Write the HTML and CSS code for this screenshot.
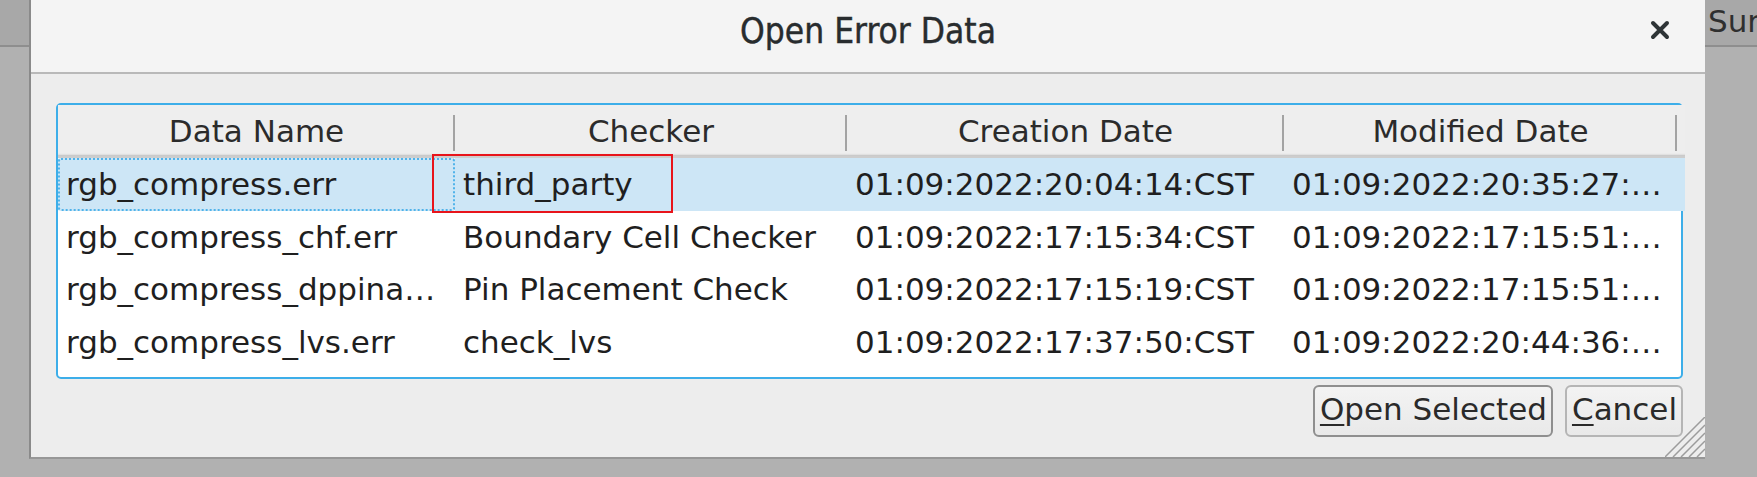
FILE: index.html
```html
<!DOCTYPE html>
<html>
<head>
<meta charset="utf-8">
<link rel="stylesheet" href="styles.css">
</head>
<body>
<div class="screen">
  <div class="side side-left"><div class="side-head"></div></div>
  <div class="dialog">
    <div class="titlebar">
      <div class="title">Open Error Data</div>
      <div class="close">
        <svg width="20" height="20" viewBox="0 0 20 20"><path d="M3 3 L17 17 M17 3 L3 17" stroke="#2e3436" stroke-width="4" stroke-linecap="round"/></svg>
      </div>
    </div>
    <div class="body">
      <div class="frame">
        <div class="grid">
          <div class="hcell">Data Name</div>
          <div class="hcell">Checker</div>
          <div class="hcell">Creation Date</div>
          <div class="hcell">Modified Date</div>
          <div class="hcell hfill"></div>

          <div class="cell sel focus">rgb_compress.err</div>
          <div class="cell sel">third_party</div>
          <div class="cell sel">01:09:2022:20:04:14:CST</div>
          <div class="cell sel">01:09:2022:20:35:27:…</div>
          <div class="cell sel"></div>

          <div class="cell">rgb_compress_chf.err</div>
          <div class="cell">Boundary Cell Checker</div>
          <div class="cell">01:09:2022:17:15:34:CST</div>
          <div class="cell">01:09:2022:17:15:51:…</div>
          <div class="cell"></div>

          <div class="cell">rgb_compress_dppina…</div>
          <div class="cell">Pin Placement Check</div>
          <div class="cell">01:09:2022:17:15:19:CST</div>
          <div class="cell">01:09:2022:17:15:51:…</div>
          <div class="cell"></div>

          <div class="cell">rgb_compress_lvs.err</div>
          <div class="cell">check_lvs</div>
          <div class="cell">01:09:2022:17:37:50:CST</div>
          <div class="cell">01:09:2022:20:44:36:…</div>
          <div class="cell"></div>
        </div>
        <div class="redbox"></div>
      </div>
      <div class="buttons">
        <button class="btn btn-default"><span class="mn">O</span>pen Selected</button>
        <button class="btn"><span class="mn">C</span>ancel</button>
      </div>
      <svg class="grip" width="40" height="40" viewBox="0 0 40 40">
        <path d="M32 40 L40 32 M24 40 L40 24 M16 40 L40 16 M8 40 L40 8 M0 40 L40 0" stroke="#9c9c9c" stroke-width="1.5"/>
      </svg>
    </div>
  </div>
  <div class="side side-right"><div class="side-head"><span class="sur">Sur</span></div></div>
</div>
</body>
</html>
```

FILE: styles.css
```css
html, body {
  margin: 0;
  padding: 0;
}
body {
  width: 1757px;
  height: 477px;
  overflow: hidden;
  background: #b1b1b1;
  font-family: "DejaVu Sans", "Liberation Sans", sans-serif;
  color: #232323;
}
.screen {
  display: flex;
  align-items: flex-start;
  height: 477px;
}
.side {
  height: 477px;
  background: #b1b1b1;
  flex: none;
}
.side-left { width: 29px; }
.side-right { width: 52px; }
.side-head {
  height: 45px;
  background: #a8a8a8;
  border-bottom: 2px solid #8e8e8e;
  overflow: hidden;
}
.sur {
  display: block;
  font-size: 31px;
  line-height: 42px;
  padding-left: 3px;
  color: #2f2f2f;
  white-space: nowrap;
}
.dialog {
  width: 1674px;
  height: 457px;
  flex: none;
  border-left: 2px solid #8a8a8a;
  border-bottom: 2px solid #979797;
  background: #ededed;
  display: flex;
  flex-direction: column;
}
.titlebar {
  height: 72px;
  background: #f4f4f4;
  border-bottom: 2px solid #b9b9b9;
  position: relative;
  display: flex;
  align-items: center;
  justify-content: center;
  flex: none;
}
.title {
  font-size: 35px;
  font-stretch: condensed;
  color: #282c2e;
  margin-top: -11px;
  -webkit-text-stroke: 0.4px #282c2e;
}
.close {
  position: absolute;
  left: 1619px;
  top: 20px;
  width: 20px;
  height: 20px;
}
.close svg { display: block; }
.body {
  flex: 1;
  position: relative;
  padding: 29px 22px 0 25px;
}
.frame {
  position: relative;
  height: 272px;
  border: 2px solid #3daee9;
  border-radius: 5px;
  background: #ffffff;
}
.grid {
  display: grid;
  grid-template-columns: 397px 392px 437px 393px 1fr;
  grid-template-rows: 53px repeat(4, 52.5px);
  font-size: 31px;
}
.hcell {
  background: #eeeeee;
  border-bottom: 2px solid #cdcdcd;
  box-shadow: inset 0 -3px 2px -2px #bdbdbd;
  text-align: center;
  line-height: 52px;
  position: relative;
  color: #2b2b2b;
  white-space: nowrap;
}
.hcell:not(.hfill)::after {
  content: "";
  position: absolute;
  right: 0;
  top: 10px;
  height: 36px;
  width: 2px;
  background: #a3a3a3;
}
.cell {
  line-height: 52px;
  padding-left: 8px;
  white-space: nowrap;
  overflow: hidden;
  color: #1f1f1f;
}
.sel {
  background: #cde6f6;
}
.focus {
  outline: 2px dotted #4fb3ea;
  outline-offset: -2px;
  border-radius: 3px;
}
.redbox {
  position: absolute;
  left: 374px;
  top: 49px;
  width: 237px;
  height: 55px;
  border: 2px solid #e8141b;
}
.buttons {
  display: flex;
  justify-content: flex-end;
  gap: 12px;
  margin-top: 6px;
}
.btn {
  height: 52px;
  font-family: "DejaVu Sans", "Liberation Sans", sans-serif;
  font-size: 31px;
  color: #2a2a2a;
  background: linear-gradient(#f3f3f3, #e9e9e9);
  border: 2px solid #b5b5b5;
  border-radius: 6px;
  padding: 0 4px 4px 5px;
  line-height: 44px;
}
.btn-default {
  border-color: #8f8f8f;
}
.mn {
  text-decoration: underline;
  text-decoration-thickness: 2px;
  text-underline-offset: 4px;
}
.grip {
  position: absolute;
  right: 0;
  bottom: 0;
  display: block;
}
```
